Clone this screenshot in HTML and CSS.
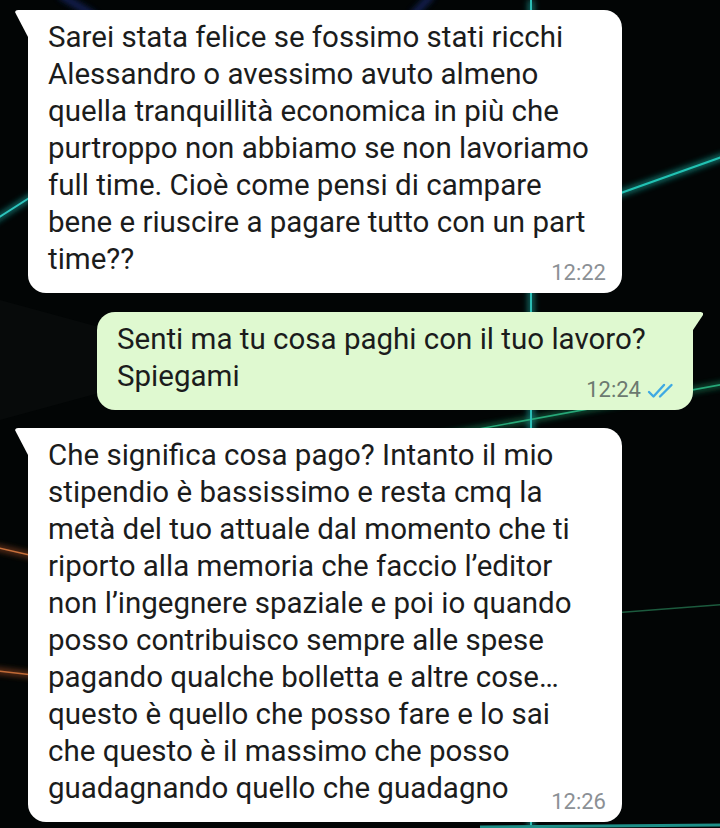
FILE: index.html
```html
<!DOCTYPE html>
<html lang="it">
<head>
<meta charset="utf-8">
<title>Chat</title>
<link rel="stylesheet" href="styles.css">
</head>
<body>
<div class="screen">
  <svg class="wallpaper" width="720" height="828" viewBox="0 0 720 828" aria-hidden="true">
    <defs>
      <filter id="glow" x="-20%" y="-20%" width="140%" height="140%">
        <feGaussianBlur stdDeviation="3"/>
      </filter>
    </defs>
    <polygon points="0,300 110,330 110,390 0,420" fill="#070a0a"/>
    <g filter="url(#glow)" opacity="0.8">
      <line x1="-10" y1="223" x2="120" y2="140" stroke="#1aa8a2" stroke-width="5"/>
      <line x1="590" y1="204" x2="730" y2="154" stroke="#17b0a4" stroke-width="5"/>
      <line x1="440" y1="436" x2="730" y2="383" stroke="#1b9a68" stroke-width="4"/>
      <line x1="531" y1="0" x2="531" y2="828" stroke="#1aa39c" stroke-width="5"/>
      <line x1="-10" y1="546" x2="60" y2="562" stroke="#b0552a" stroke-width="4"/>
      <line x1="-10" y1="670" x2="60" y2="678" stroke="#b0552a" stroke-width="4"/>
      <line x1="60" y1="-5" x2="95" y2="16" stroke="#1b2e7a" stroke-width="6"/>
      <line x1="432" y1="-5" x2="412" y2="16" stroke="#1b2e7a" stroke-width="6"/>
    </g>
    <line x1="-10" y1="223" x2="120" y2="140" stroke="#2ec4bd" stroke-width="2"/>
    <line x1="590" y1="204" x2="730" y2="154" stroke="#22c2b3" stroke-width="2.2"/>
    <line x1="440" y1="436" x2="730" y2="383" stroke="#27a878" stroke-width="1.6"/>
    <line x1="531" y1="0" x2="531" y2="828" stroke="#2cbdb5" stroke-width="2"/>
    <line x1="600" y1="614" x2="730" y2="604" stroke="#1c5b3e" stroke-width="1.5"/>
    <line x1="-10" y1="546" x2="60" y2="562" stroke="#c8703a" stroke-width="1.5"/>
    <line x1="-10" y1="670" x2="60" y2="678" stroke="#c06a36" stroke-width="1.5"/>
    <line x1="480" y1="827" x2="730" y2="825" stroke="#1e8f88" stroke-width="3"/>
  </svg>

  <div class="chat">
    <div class="msg msg-in">
      <p class="msg-text">Sarei stata felice se fossimo stati ricchi<br>Alessandro o avessimo avuto almeno<br>quella tranquillità economica in più che<br>purtroppo non abbiamo se non lavoriamo<br>full time. Cioè come pensi di campare<br>bene e riuscire a pagare tutto con un part<br>time??</p>
      <div class="msg-meta"><span class="msg-time">12:22</span></div>
    </div>

    <div class="msg msg-out">
      <p class="msg-text">Senti ma tu cosa paghi con il tuo lavoro?<br>Spiegami</p>
      <div class="msg-meta">
        <span class="msg-time">12:24</span>
        <svg class="ticks" width="29" height="16" viewBox="0 0 29 16" aria-hidden="true">
          <path d="M2 9 L6.5 13.5 L17 2 M13 13.5 L24.5 2" fill="none" stroke="#3ea9e3" stroke-width="2.4" stroke-linecap="round" stroke-linejoin="round"/>
        </svg>
      </div>
    </div>

    <div class="msg msg-in">
      <p class="msg-text">Che significa cosa pago? Intanto il mio<br>stipendio è bassissimo e resta cmq la<br>metà del tuo attuale dal momento che ti<br>riporto alla memoria che faccio l’editor<br>non l’ingegnere spaziale e poi io quando<br>posso contribuisco sempre alle spese<br>pagando qualche bolletta e altre cose…<br>questo è quello che posso fare e lo sai<br>che questo è il massimo che posso<br>guadagnando quello che guadagno</p>
      <div class="msg-meta"><span class="msg-time">12:26</span></div>
    </div>
  </div>
</div>
</body>
</html>
```

FILE: styles.css
```css
* {
  box-sizing: border-box;
}

html, body {
  margin: 0;
  padding: 0;
  background: #020505;
}

body {
  font-family: Roboto, "Noto Sans", "Liberation Sans", sans-serif;
}

.screen {
  position: relative;
  width: 720px;
  height: 828px;
  overflow: hidden;
  background: #020505;
}

.wallpaper {
  position: absolute;
  inset: 0;
  display: block;
}

.chat {
  position: relative;
  display: flex;
  flex-direction: column;
  padding-top: 10px;
  gap: 18px;
}

.msg {
  position: relative;
  padding: 9px 16px 8px 20px;
  border-radius: 18px;
}

.msg-in {
  align-self: flex-start;
  width: 594px;
  margin-left: 28px;
  background: #ffffff;
  border-top-left-radius: 0;
}

.msg-in::before {
  content: "";
  position: absolute;
  top: 0;
  left: -13px;
  width: 13px;
  height: 27px;
  background: #ffffff;
  clip-path: polygon(3px 0, 100% 0, 100% 100%, 1px 4px, 0 2px, 1px 0.5px);
}

.msg-out {
  align-self: flex-end;
  width: 596px;
  margin-right: 27px;
  padding-right: 17px;
  background: #dff9d0;
  border-top-right-radius: 0;
}

.msg-out::after {
  content: "";
  position: absolute;
  top: 0;
  right: -10px;
  width: 10px;
  height: 18px;
  background: #dff9d0;
  clip-path: polygon(0 0, calc(100% - 2px) 0, 100% 1px, 100% 3px, 0 100%);
}

.msg + .msg-out {
  margin-top: 1px;
}

.msg-text {
  margin: 0;
  font-size: 29.5px;
  line-height: 37px;
  color: #1b1c1c;
  white-space: nowrap;
}

.msg-meta {
  display: flex;
  justify-content: flex-end;
  align-items: center;
  gap: 6px;
  margin-top: -17px;
  height: 24px;
}

.msg-time {
  font-size: 22px;
  line-height: 24px;
  color: #8b9095;
}

.msg-out .msg-time {
  color: #6c7a70;
}

.ticks {
  display: block;
  margin-top: 1px;
}
```
